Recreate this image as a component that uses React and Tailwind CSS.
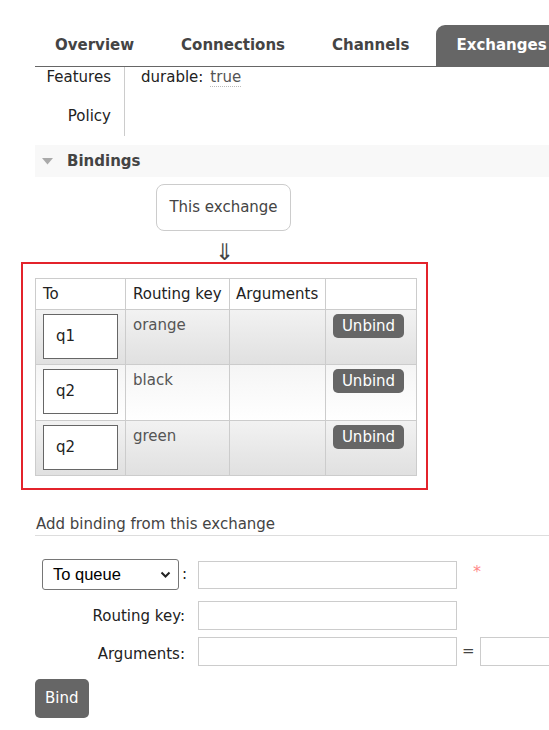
import React from 'react'

const tabs = [
  { label: 'Overview' },
  { label: 'Connections' },
  { label: 'Channels' },
  { label: 'Exchanges', active: true },
]

const bindings = [
  { to: 'q1', key: 'orange', row: 'h-[55px] bg-gradient-to-b from-[#f2f2f2] to-[#e0e0e0]' },
  { to: 'q2', key: 'black', row: 'h-[56px] bg-gradient-to-b from-[#f5f5f5] to-[#ffffff]' },
  { to: 'q2', key: 'green', row: 'h-[55px] bg-gradient-to-b from-[#f2f2f2] to-[#e0e0e0]' },
]

export default function App() {
  return (
    <div className="w-[549px] h-[730px] overflow-hidden bg-white text-[15px] text-[#222] font-['DejaVu_Sans',Verdana,sans-serif]">
      {/* Tabs */}
      <div className="w-[620px] pt-[25px] pl-[35px]">
        <div className="flex gap-[7px] border-b border-[#666]">
          {tabs.map(t => (
            <div
              key={t.label}
              className={
                'h-[41px] px-[20px] flex items-center font-bold text-[15px] shrink-0 ' +
                (t.active ? 'bg-[#666] text-white rounded-tl-[9px]' : 'text-[#444]')
              }
            >
              {t.label}
            </div>
          ))}
        </div>
      </div>

      {/* Details */}
      <div className="ml-[33px] flex">
        <div className="w-[92px] h-[69px] border-r border-[#ccc] pr-[13px] text-right">
          <div className="h-[18px] mt-[1px] leading-[18px]">Features</div>
          <div className="h-[18px] mt-[21px] leading-[18px]">Policy</div>
        </div>
        <div className="pl-[16px] pt-[1px] flex items-baseline gap-[7px] h-[19px] leading-[18px]">
          <span>durable:</span>
          <span className="text-[#555] border-b border-dotted border-[#bbb] leading-[18px]">true</span>
        </div>
      </div>

      {/* Bindings header */}
      <div className="mt-[9px] ml-[35px] w-[560px] h-[32px] bg-[#f8f8f8] flex items-center">
        <svg width="11" height="7" viewBox="0 0 11 7" className="ml-[7px] mt-[1px]">
          <path d="M0 0 L11 0 L5.5 6.5 Z" fill="#aaa" />
        </svg>
        <span className="ml-[14px] font-bold text-[#444]">Bindings</span>
      </div>

      <div className="ml-[156px] mt-[7px] w-[135px] h-[47px] border border-[#ccc] rounded-[8px] flex items-center justify-center text-[#444]">
        This exchange
      </div>
      <div className="ml-[215px] h-[31px] pt-[11px] text-[23px] leading-[20px] text-[#444]">⇓</div>

      {/* Bindings table */}
      <div className="ml-[21px] w-[407px] h-[228px] border-2 border-[#e3232b] pt-[14px] pl-[12px]">
        <table className="border-collapse">
          <thead>
            <tr className="h-[31px]">
              <th className="w-[90px] border border-[#ccc] px-[7px] text-left font-normal">To</th>
              <th className="w-[104px] border border-[#ccc] px-[7px] text-left font-normal">Routing key</th>
              <th className="w-[96px] border border-[#ccc] px-[6px] text-left font-normal">Arguments</th>
              <th className="w-[91px] border border-[#ccc]"></th>
            </tr>
          </thead>
          <tbody>
            {bindings.map((b, i) => (
              <tr key={i} className={b.row}>
                <td className="border border-[#ccc] px-[7px] pt-[4px] align-top">
                  <div className="w-[75px] h-[45px] border border-[#666] bg-white flex items-center pl-[12px]">
                    {b.to}
                  </div>
                </td>
                <td className="border border-[#ccc] px-[7px] pt-[4px] align-top text-[#555]">{b.key}</td>
                <td className="border border-[#ccc]"></td>
                <td className="border border-[#ccc] pl-[7px] pt-[4px] align-top">
                  <button className="w-[71px] h-[24px] bg-[#666] text-white rounded-[5px] text-[15px] leading-[24px]">
                    Unbind
                  </button>
                </td>
              </tr>
            ))}
          </tbody>
        </table>
      </div>

      {/* Add binding */}
      <div className="ml-[35px] mt-[25px] w-[560px] border-b border-[#ddd] pl-[1px] pb-[2px] leading-[18px] text-[#444]">
        Add binding from this exchange
      </div>

      <div className="ml-[42px] mt-[23px] w-[600px] flex flex-col">
        <div className="flex items-center h-[31px]">
          <div className="shrink-0 w-[137px] h-[31px] border border-[#767676] rounded-[3px] flex items-center pl-[10px] pr-[7px] justify-between font-['Liberation_Sans',Arial,sans-serif] text-[16.5px] text-black">
            <span>To queue</span>
            <svg width="11" height="8" viewBox="0 0 11 8">
              <path d="M1.5 1.5 L5.5 5.5 L9.5 1.5" stroke="#222" strokeWidth="2" fill="none" />
            </svg>
          </div>
          <span className="shrink-0 ml-[3px] w-[16px]">:</span>
          <div className="shrink-0 w-[259px] h-[28px] border border-[#ccc]"></div>
          <span className="ml-[16px] -mt-[6px] text-[#f88] text-[16px]">*</span>
        </div>

        <div className="flex items-center mt-[11px]">
          <div className="shrink-0 w-[143px] text-right pt-[2px]">Routing key:</div>
          <div className="shrink-0 ml-[13px] w-[259px] h-[29px] border border-[#ccc]"></div>
        </div>

        <div className="flex items-center mt-[7px]">
          <div className="shrink-0 w-[143px] text-right pt-[6px]">Arguments:</div>
          <div className="shrink-0 ml-[13px] w-[259px] h-[29px] border border-[#ccc]"></div>
          <span className="shrink-0 ml-[5px] text-[#444]">=</span>
          <div className="shrink-0 ml-[5px] w-[100px] h-[29px] border border-[#ccc]"></div>
        </div>
      </div>

      <button className="ml-[35px] mt-[13px] w-[54px] h-[39px] bg-[#666] text-white rounded-[5px] text-left pl-[10px]">
        Bind
      </button>
    </div>
  )
}
